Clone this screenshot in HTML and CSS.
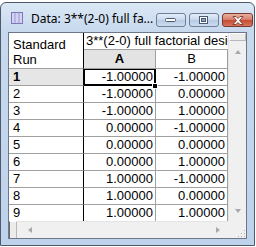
FILE: index.html
```html
<!DOCTYPE html>
<html lang="en">
<head>
  <meta charset="UTF-8" />
  <link rel="stylesheet" href="styles.css">
</head>
<body>
  <div class="window">
    <div class="title-bar">
      <svg class="app-icon" width="12" height="12" viewBox="0 0 12 12">
        <rect x="0.5" y="0.5" width="11" height="11" fill="#d4d2f2" stroke="#7b78b8"/>
        <path d="M4 1v10M8 1v10" stroke="#9c99d0"/>
      </svg>
      <span class="title">Data: 3**(2-0) full fa...</span>
      <div class="caption-buttons">
        <button class="cap-btn">
          <svg width="12" height="6" viewBox="0 0 12 6"><rect x="0.5" y="1.5" width="10" height="3" rx="1" fill="#fff" stroke="#485a74"/></svg>
        </button>
        <button class="cap-btn">
          <svg width="12" height="9" viewBox="0 0 12 9"><rect x="1.5" y="0.5" width="8" height="7" fill="#fff" stroke="#485a74"/><rect x="3.5" y="2.5" width="4" height="3" fill="#8ea3bf" stroke="#485a74"/></svg>
        </button>
        <button class="cap-btn close">
          <svg width="14" height="9" viewBox="0 0 14 9"><path d="M2 0.5h3l2 2 2-2h3l-3.5 4 3.5 4h-3l-2-2-2 2h-3l3.5-4z" fill="#fff" stroke="#6a2a20" stroke-width="0.8"/></svg>
        </button>
      </div>
    </div>
    <div class="client">
      <div class="sheet-row">
        <div class="sheet">
          <div class="cell corner">Standard<br>Run</div>
          <div class="cell sheet-name">3**(2-0) full factorial design</div>
          <div class="cell col-head selected">A</div>
          <div class="cell col-head">B</div>

          <div class="cell row-head selected">1</div>
          <div class="cell num active">-1.00000</div>
          <div class="cell num">-1.00000</div>

          <div class="cell row-head">2</div>
          <div class="cell num">-1.00000</div>
          <div class="cell num">0.00000</div>

          <div class="cell row-head">3</div>
          <div class="cell num">-1.00000</div>
          <div class="cell num">1.00000</div>

          <div class="cell row-head">4</div>
          <div class="cell num">0.00000</div>
          <div class="cell num">-1.00000</div>

          <div class="cell row-head">5</div>
          <div class="cell num">0.00000</div>
          <div class="cell num">0.00000</div>

          <div class="cell row-head">6</div>
          <div class="cell num">0.00000</div>
          <div class="cell num">1.00000</div>

          <div class="cell row-head">7</div>
          <div class="cell num">1.00000</div>
          <div class="cell num">-1.00000</div>

          <div class="cell row-head">8</div>
          <div class="cell num">1.00000</div>
          <div class="cell num">0.00000</div>

          <div class="cell row-head">9</div>
          <div class="cell num">1.00000</div>
          <div class="cell num">1.00000</div>
        </div>
        <div class="vscroll">
          <div class="split-box"></div>
          <div class="arrow up"></div>
          <div class="track"></div>
          <div class="arrow down"></div>
        </div>
      </div>
      <div class="hscroll-row">
        <div class="hscroll">
          <div class="split-box"></div>
          <div class="arrow left"></div>
          <div class="track"></div>
          <div class="arrow right"></div>
        </div>
        <div class="grip">
          <svg width="10" height="10" viewBox="0 0 10 10" fill="#b0b0b0">
            <rect x="8" y="2" width="1" height="1"/><rect x="5" y="5" width="1" height="1"/><rect x="8" y="5" width="1" height="1"/>
            <rect x="2" y="8" width="1" height="1"/><rect x="5" y="8" width="1" height="1"/><rect x="8" y="8" width="1" height="1"/>
          </svg>
        </div>
      </div>
    </div>
  </div>
</body>
</html>
```

FILE: styles.css
```css
body {
  margin: 0;
  background: #fff;
  font-family: 'Liberation Sans', Arial, sans-serif;
}
.window {
  margin-top: 2px;
  width: 255px;
  height: 244px;
  box-sizing: border-box;
  border: 1px solid #4d5a6b;
  border-radius: 6px 6px 0 0;
  background: linear-gradient(#dbe7f5, #c8d9ee 28px, #bed2eb);
  padding: 0 7px 6px 7px;
  display: flex;
  flex-direction: column;
}
.title-bar {
  height: 28px;
  display: flex;
  align-items: center;
  padding-left: 3px;
  padding-top: 1px;
}
.app-icon {
  flex: none;
}
.title {
  margin-left: 8px;
  font-family: 'Noto Sans', 'Open Sans', sans-serif;
  font-size: 12px;
  color: #000;
  white-space: nowrap;
  flex: 1;
}
.caption-buttons {
  display: flex;
  gap: 3px;
  margin-right: -6px;
  margin-top: 4px;
}
.cap-btn {
  width: 30px;
  height: 14px;
  padding: 0;
  border: 1px solid #6d7f99;
  border-radius: 3px;
  background: linear-gradient(#e4edf8, #c7d7ec 50%, #b5c9e3 50%, #cddcf0);
  display: flex;
  align-items: center;
  justify-content: center;
}
.cap-btn.close {
  width: 31px;
  border-color: #7a3a30;
  background: linear-gradient(#eab0a0, #d67a66 50%, #c54a33 50%, #d8765a);
}
.client {
  flex: 1;
  border: 1px solid #6b7789;
  background: #fff;
  display: flex;
  flex-direction: column;
  overflow: hidden;
}
.sheet-row {
  flex: 1;
  display: flex;
  min-height: 0;
}
.sheet {
  flex: 1;
  display: grid;
  grid-template-columns: 75px 72px 72px;
  grid-template-rows: 17px 19px;
  grid-auto-rows: 17px;
  align-content: start;
  font-size: 13px;
  color: #000;
  overflow: hidden;
}
.cell {
  box-sizing: border-box;
  border-right: 1px solid #a0a0a0;
  border-bottom: 1px solid #a0a0a0;
  line-height: 16px;
  white-space: nowrap;
  overflow: hidden;
}
.corner {
  grid-row: span 2;
  border-right-color: #000;
  padding: 4px 0 0 4px;
  line-height: 15px;
}
.sheet-name {
  grid-column: span 2;
  padding-left: 2px;
  border-right: none;
}
.col-head {
  text-align: center;
  line-height: 18px;
}
.col-head.selected {
  background: #e3e3e3;
  font-weight: bold;
}
.row-head {
  padding-left: 4px;
  border-right-color: #000;
}
.row-head.selected {
  background: #e6e6e6;
  font-weight: bold;
}
.num {
  text-align: right;
  padding-right: 2px;
}
.active {
  position: relative;
  overflow: visible;
  box-shadow: inset 0 0 0 1px #000;
  border-right: 1px solid #000;
  border-bottom: 1px solid #000;
}
.active::after {
  content: '';
  position: absolute;
  right: -3px;
  bottom: -4px;
  width: 4px;
  height: 4px;
  background: #000;
  border: 1px solid #fff;
}
.vscroll {
  width: 17px;
  background: #f0f0f0;
  border-left: 1px solid #e4e4e4;
  display: flex;
  flex-direction: column;
  align-items: center;
}
.vscroll .split-box {
  width: 15px;
  height: 6px;
  border: 1px solid #b8b8b8;
  border-top-color: #fff;
  border-left-color: #fff;
  background: #ececec;
}
.track {
  flex: 1;
}
.arrow {
  width: 0;
  height: 0;
  border: 3px solid transparent;
}
.arrow.up {
  margin-top: 6px;
  border-bottom: 4px solid #a8a8a8;
}
.arrow.down {
  margin-bottom: 5px;
  border-top: 4px solid #a8a8a8;
}
.hscroll-row {
  height: 17px;
  display: flex;
}
.hscroll {
  flex: 1;
  background: #f0f0f0;
  border-top: 1px solid #e4e4e4;
  display: flex;
  align-items: center;
}
.hscroll .split-box {
  width: 6px;
  height: 16px;
  border: 1px solid #fff;
  border-left-color: #6c6c6c;
  border-bottom-color: #6c6c6c;
  border-right-color: #b8b8b8;
  background: #ececec;
}
.arrow.left {
  margin-left: 8px;
  border-right: 4px solid #a8a8a8;
}
.arrow.right {
  margin-right: 5px;
  border-left: 4px solid #a8a8a8;
}
.grip {
  width: 18px;
  background: #f0f0f0;
  display: flex;
  align-items: flex-end;
  justify-content: flex-end;
}
```
